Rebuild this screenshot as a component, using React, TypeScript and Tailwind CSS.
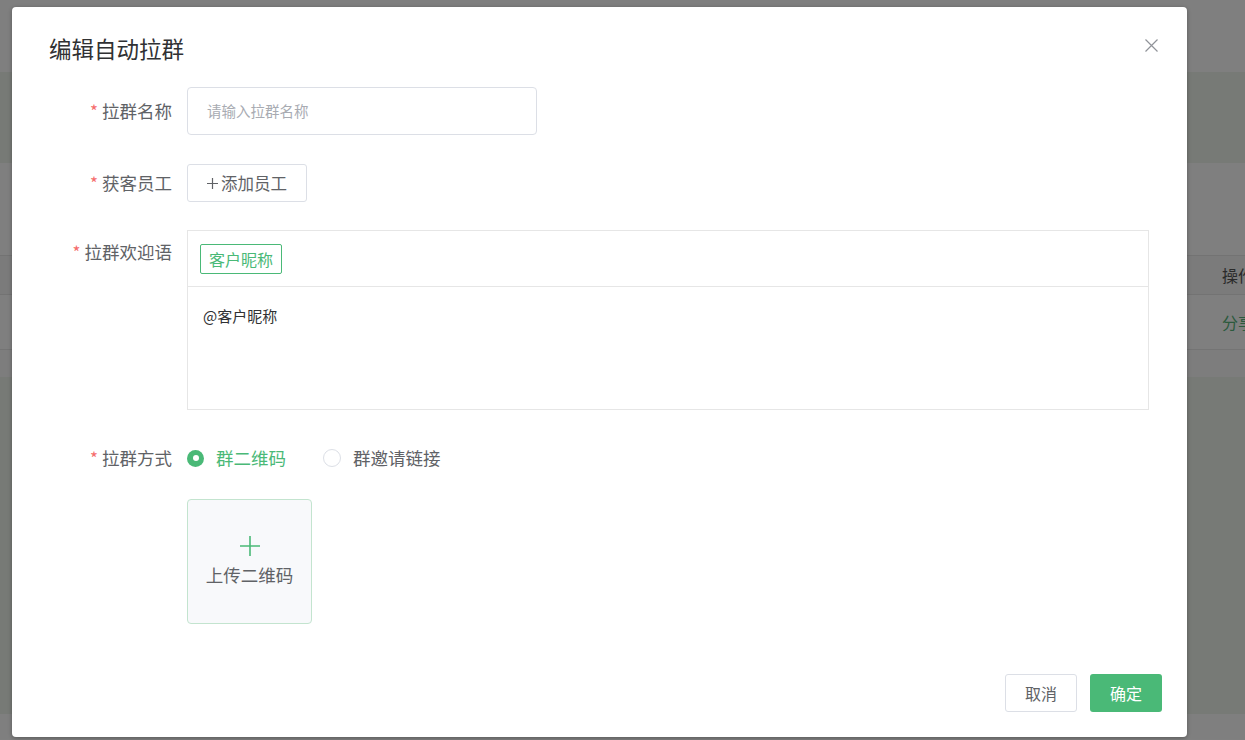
const GREEN = "#4ab977";

function Label({ text, className = "" }: { text: string; className?: string }) {
  return (
    <div className={`w-[175px] shrink-0 pr-[15px] text-right text-[17.5px] text-[#606266] ${className}`}>
      <span className="mr-[4px] text-[17px] text-[#f56c6c]">*</span>
      {text}
    </div>
  );
}

function Radio({ checked, label }: { checked: boolean; label: string }) {
  return (
    <label className="flex items-center gap-[12px]">
      {checked ? (
        <span className="flex h-[17px] w-[17px] items-center justify-center rounded-full bg-[#4ab977]">
          <span className="h-[6px] w-[6px] rounded-full bg-white" />
        </span>
      ) : (
        <span className="h-[18px] w-[18px] rounded-full border border-[#dcdfe6] bg-white" />
      )}
      <span className={`text-[17.5px] ${checked ? "text-[#4ab977]" : "text-[#606266]"}`}>{label}</span>
    </label>
  );
}

export default function App() {
  return (
    <div className="relative h-[740px] w-[1245px] overflow-hidden bg-[#808080] font-['Microsoft_YaHei','Noto_Sans_CJK_SC',sans-serif]">
      {/* page under the overlay */}
      <div className="flex flex-col">
        <div className="h-[72px] bg-[#7f7f7f]" />
        <div className="h-[91px] bg-[#777a76]" />
        <div className="h-[92px] bg-[#7f7f7f]" />
        <div className="flex h-[40px] items-center border-t border-b border-[#737373] bg-[#7b7b7b] pl-[1222px] text-[16px] whitespace-nowrap text-[#2a2a2a]">
          操作
        </div>
        <div className="flex h-[55px] items-center border-b border-[#747474] bg-[#7f7f7f] pl-[1222px] text-[16px] whitespace-nowrap text-[#2c5a3d]">
          分享
        </div>
        <div className="h-[27px] bg-[#7d7d7d]" />
        <div className="h-[337px] bg-[#777a76]" />
        <div className="h-[25px] bg-[#7f7f7f]" />
      </div>

      {/* dialog */}
      <div className="absolute left-[12px] top-[7px] flex h-[730px] w-[1175px] flex-col rounded-[4px] bg-white shadow-[0_1px_4px_rgba(0,0,0,0.3)]">
        <div className="relative pl-[37px] pt-[26px]">
          <h2 className="text-[22.5px] leading-[30px] text-[#303133]">编辑自动拉群</h2>
          <button className="absolute right-[29px] top-[32px]">
            <svg width="13" height="13" viewBox="0 0 13 13" className="block">
              <path d="M0.5 0.5l12 12M12.5 0.5l-12 12" stroke="#909399" strokeWidth="1.2" />
            </svg>
          </button>
        </div>

        <div className="mt-[24px] flex flex-col">
          <div className="flex h-[48px] items-center">
            <Label text="拉群名称" />
            <div className="flex h-[48px] w-[350px] items-center rounded-[4px] border border-[#dcdfe6] px-[19px] text-[14.5px] text-[#a8abb2]">
              请输入拉群名称
            </div>
          </div>

          <div className="mt-[29px] flex h-[38px] items-center">
            <Label text="获客员工" />
            <button className="flex h-[38px] w-[120px] items-center justify-center gap-[3px] rounded-[3px] border border-[#dcdfe6] text-[16.5px] text-[#606266]">
              <svg width="11" height="11" viewBox="0 0 11 11" className="mt-[1px]">
                <path d="M5.5 0v11M0 5.5h11" stroke="#606266" strokeWidth="1.2" />
              </svg>
              添加员工
            </button>
          </div>

          <div className="mt-[28px] flex">
            <Label text="拉群欢迎语" className="leading-[44px]" />
            <div className="h-[180px] w-[962px] border border-[#e6e6e6]">
              <div className="flex h-[56px] items-center border-b border-[#e6e6e6] pl-[12px]">
                <span className="flex h-[30px] items-center rounded-[2px] border border-[#4ab977] px-[8px] text-[16px] text-[#4ab977]">
                  客户昵称
                </span>
              </div>
              <div className="pl-[15px] pt-[18px] text-[15px] leading-[22px] text-[#303133]">@客户昵称</div>
            </div>
          </div>

          <div className="mt-[28px] flex h-[40px] items-center">
            <Label text="拉群方式" />
            <div className="flex items-center gap-[37px]">
              <Radio checked label="群二维码" />
              <Radio checked={false} label="群邀请链接" />
            </div>
          </div>

          <div className="mt-[21px] pl-[175px]">
            <div className="flex h-[125px] w-[125px] flex-col items-center justify-center rounded-[4px] border border-[#c3e4cf] bg-[#f8f9fb]">
              <svg width="20" height="20" viewBox="0 0 20 20">
                <path d="M10 0v20M0 10h20" stroke={GREEN} strokeWidth="1.6" />
              </svg>
              <span className="mt-[7px] text-[17.5px] leading-[24px] text-[#606266]">上传二维码</span>
            </div>
          </div>
        </div>

        <div className="mt-auto flex justify-end gap-[13px] pb-[25px] pr-[25px]">
          <button className="h-[38px] w-[72px] rounded-[3px] border border-[#dcdfe6] bg-white text-[16px] text-[#606266]">
            取消
          </button>
          <button className="h-[38px] w-[72px] rounded-[3px] bg-[#4ab977] text-[16px] text-white">确定</button>
        </div>
      </div>
    </div>
  );
}
